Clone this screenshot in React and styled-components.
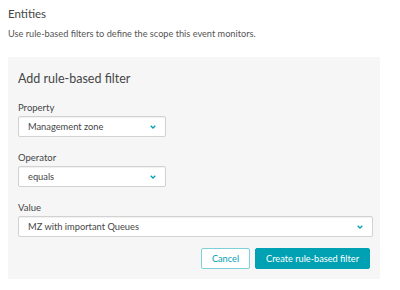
import React from 'react'
import styled, { createGlobalStyle } from 'styled-components'

const Global = createGlobalStyle`
  body {
    margin: 0;
    background: #fff;
    font-family: Lato, "Open Sans", sans-serif;
    color: #454646;
  }
`

function Chevron() {
  return (
    <svg width="6" height="4" viewBox="0 0 6 4">
      <path d="M0.7 0.7 L3 3 L5.3 0.7" fill="none" stroke="#00a1b2" strokeWidth="1.3" />
    </svg>
  )
}

function Select({ value, wide }) {
  return (
    <SelectBox wide={wide}>
      <span>{value}</span>
      <Chevron />
    </SelectBox>
  )
}

export default function App() {
  return (
    <Page>
      <Global />
      <Title>Entities</Title>
      <Subtitle>Use rule-based filters to define the scope this event monitors.</Subtitle>
      <Panel>
        <PanelTitle>Add rule-based filter</PanelTitle>
        <Field>
          <Label>Property</Label>
          <Select value="Management zone" />
        </Field>
        <Field>
          <Label>Operator</Label>
          <Select value="equals" />
        </Field>
        <Field>
          <Label>Value</Label>
          <Select value="MZ with important Queues" wide />
        </Field>
        <Actions>
          <Button>Cancel</Button>
          <Button primary>Create rule-based filter</Button>
        </Actions>
      </Panel>
    </Page>
  )
}

const Page = styled.div`
  padding: 6px 20px 0 8px;
  width: 372px;
`
const Title = styled.div`
  font-size: 11.5px;
  line-height: 16px;
  color: #454646;
`
const Subtitle = styled.div`
  font-size: 9.2px;
  line-height: 12px;
  margin-top: 6px;
  color: #555;
`
const Panel = styled.div`
  margin-top: 17px;
  background: #f6f6f6;
  padding: 13px 8px 10px 10px;
  display: flex;
  flex-direction: column;
`
const PanelTitle = styled.div`
  font-size: 12.5px;
  line-height: 18px;
  margin-bottom: 13px;
`
const Field = styled.div`
  display: flex;
  flex-direction: column;
  & + & {
    margin-top: 14px;
  }
`
const Label = styled.div`
  font-size: 9.5px;
  line-height: 13px;
  margin-bottom: 2px;
`
const SelectBox = styled.div`
  box-sizing: border-box;
  width: ${p => (p.wide ? '355px' : '148px')};
  height: 21px;
  background: #fff;
  border: 1px solid #d2d2d2;
  border-radius: 2px;
  box-shadow: inset 0 1px 1px rgba(0,0,0,0.06);
  display: flex;
  align-items: center;
  justify-content: space-between;
  padding: 0 9px 0 9px;
  font-size: 9.3px;
`
const Actions = styled.div`
  display: flex;
  justify-content: flex-end;
  gap: 5px;
  margin-top: 11px;
  padding-right: 2px;
`
const Button = styled.button`
  box-sizing: border-box;
  height: 21px;
  padding: 0 10px;
  border-radius: 2px;
  font-family: inherit;
  font-size: 9.2px;
  border: 1px solid #00a1b2;
  background: ${p => (p.primary ? '#00a1b2' : '#fff')};
  color: ${p => (p.primary ? '#fff' : '#00a1b2')};
  ${p => !p.primary && 'border-color: #7fd0d8;'}
`
